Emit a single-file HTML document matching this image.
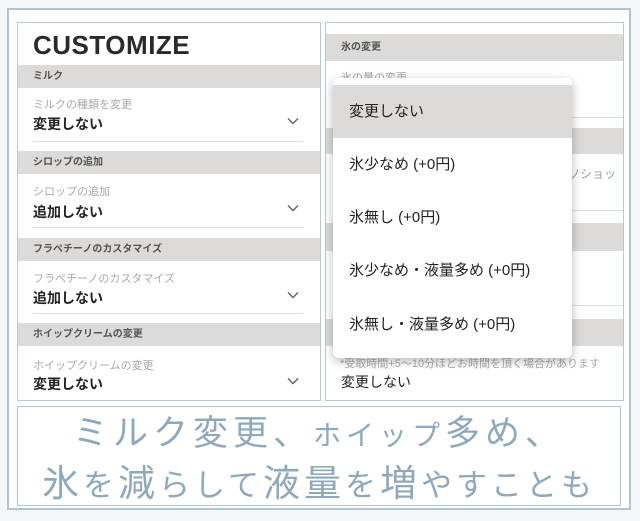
<!DOCTYPE html>
<html><head><meta charset="utf-8"><style>
*{margin:0;padding:0;box-sizing:border-box}
body{width:640px;height:521px;background:#f4f6f7;position:relative;overflow:hidden;font-family:"Liberation Sans","Noto Sans CJK JP",sans-serif}
.a{position:absolute}
.outer{left:7px;top:8px;width:624px;height:502px;border:2px solid #b3c4d0;background:#fff}
.panel{border:1px solid #b8c8d3;background:#fff;overflow:hidden}
.hd{position:absolute;left:0;right:0;background:#dcdbd9;font-size:10px;font-weight:bold;color:#555;padding-left:15px}
.lb{position:absolute;left:15px;font-size:11px;color:#a8a8a8}
.vl{position:absolute;left:15px;font-size:14px;font-weight:bold;color:#222}
.ln{position:absolute;left:15px;width:270px;border-top:1px solid #ddd}
.chev{position:absolute;left:269px;width:12px;height:8px}
.item{position:absolute;left:0;right:0;height:53px;line-height:53px;padding-left:16px;font-size:15px;color:#222}
.bt{position:absolute;left:17px;width:604px;text-align:center;color:#8fa9bb;font-family:'Noto Sans CJK JP',sans-serif;font-weight:400;white-space:nowrap}
</style></head><body>
<div class="a outer"></div>
<div class="a panel" style="left:17px;top:22px;width:304px;height:379px">
 <div class="a" style="left:15px;top:7px;font-size:26px;font-weight:bold;color:#2a2a2a;letter-spacing:0.5px">CUSTOMIZE</div>
 <div class="hd" style="top:42px;height:23px;line-height:23px">ミルク</div>
 <div class="lb" style="top:73px">ミルクの種類を変更</div>
 <div class="vl" style="top:91px">変更しない</div>
 <svg class="chev" style="top:94px" viewBox="0 0 12 8"><path d="M1 1.5L6 6.5L11 1.5" fill="none" stroke="#666" stroke-width="1.5"/></svg>
 <div class="ln" style="top:118px"></div>
 <div class="hd" style="top:128px;height:23px;line-height:23px">シロップの追加</div>
 <div class="lb" style="top:160px">シロップの追加</div>
 <div class="vl" style="top:179px">追加しない</div>
 <svg class="chev" style="top:181px" viewBox="0 0 12 8"><path d="M1 1.5L6 6.5L11 1.5" fill="none" stroke="#666" stroke-width="1.5"/></svg>
 <div class="ln" style="top:204px"></div>
 <div class="hd" style="top:215px;height:23px;line-height:23px">フラペチーノのカスタマイズ</div>
 <div class="lb" style="top:247px">フラペチーノのカスタマイズ</div>
 <div class="vl" style="top:265px">追加しない</div>
 <svg class="chev" style="top:268px" viewBox="0 0 12 8"><path d="M1 1.5L6 6.5L11 1.5" fill="none" stroke="#666" stroke-width="1.5"/></svg>
 <div class="ln" style="top:290px"></div>
 <div class="hd" style="top:300px;height:23px;line-height:23px">ホイップクリームの変更</div>
 <div class="lb" style="top:334px">ホイップクリームの変更</div>
 <div class="vl" style="top:351px">変更しない</div>
 <svg class="chev" style="top:354px" viewBox="0 0 12 8"><path d="M1 1.5L6 6.5L11 1.5" fill="none" stroke="#666" stroke-width="1.5"/></svg>
</div>
<div class="a panel" style="left:325px;top:22px;width:299px;height:379px">
 <div class="hd" style="top:11px;height:27px;line-height:27px">氷の変更</div>
 <div class="lb" style="top:46px">氷の量の変更</div>
 <div class="ln" style="top:94px;width:284px"></div>
 <div class="hd" style="top:105px;height:26px"></div>
 <div class="lb" style="top:142px;left:230px;font-size:12px;color:#999">ッソショッ</div>
 <div class="ln" style="top:187px;width:284px"></div>
 <div class="hd" style="top:200px;height:28px"></div>
 <div class="ln" style="top:282px;width:284px"></div>
 <div class="hd" style="top:296px;height:27px"></div>
 <div class="lb" style="top:332px;left:14px;font-size:11px;color:#aaa;white-space:nowrap">*受取時間+5〜10分ほどお時間を頂く場合があります</div>
 <div class="a" style="left:15px;top:349px;font-size:14px;color:#222">変更しない</div>
</div>
<div class="a" style="left:333px;top:78px;width:239px;height:280px;background:#fff;border-radius:6px;box-shadow:0 3px 10px rgba(0,0,0,0.28);overflow:hidden">
 <div class="item" style="top:7px;background:#dcdbd9">変更しない</div>
 <div class="item" style="top:60px">氷少なめ (+0円)</div>
 <div class="item" style="top:113px">氷無し (+0円)</div>
 <div class="item" style="top:166px">氷少なめ・液量多め (+0円)</div>
 <div class="item" style="top:220px">氷無し・液量多め (+0円)</div>
</div>
<div class="a" style="left:17px;top:406px;width:604px;height:100px;border:1px solid #b3c4d0;background:#fff"></div>
<div class="bt" style="top:408px;font-size:35px;line-height:46px;letter-spacing:5px">ミルク変更、<span style="font-size:28px">ホイップ</span>多め、</div>
<div class="bt" style="top:457px;font-size:37px;line-height:46px;letter-spacing:4px">氷<span style="font-size:31px">を</span>減<span style="font-size:31px">らして</span>液量<span style="font-size:31px">を</span>増<span style="font-size:31px">やすことも</span></div>
</body></html>
